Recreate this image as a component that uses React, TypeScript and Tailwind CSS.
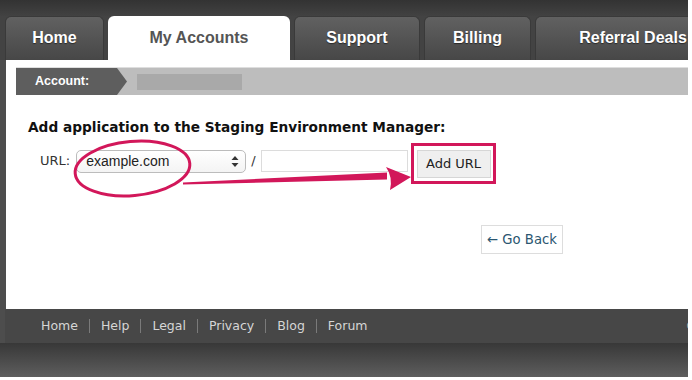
import React from "react";

const tabs = [
  { label: "Home", w: "w-[99px]", active: false },
  { label: "My Accounts", w: "w-[182px]", active: true },
  { label: "Support", w: "w-[126px]", active: false },
  { label: "Billing", w: "w-[107px]", active: false },
  { label: "Referral Deals", w: "w-[196px]", active: false },
];

const links = ["Home", "Help", "Legal", "Privacy", "Blog", "Forum"];

const Annotation = () => (
  <svg className="pointer-events-none absolute left-0 top-0" width="692" height="380" viewBox="0 0 692 380">
    <ellipse cx="132.5" cy="168.5" rx="57.5" ry="27" fill="none" stroke="#d2175a" strokeWidth="3" transform="rotate(-5 132.5 168.5)" />
    <polygon points="183,182.5 387,172.5 387,179.5 183,184.5" fill="#d2175a" />
    <path d="M386 167 L411 177 L390 190 Q393 177 386 167 Z" fill="#d2175a" />
  </svg>
);

export default function App() {
  return (
    <div className="relative h-[380px] w-[692px] bg-white" style={{ fontFamily: '"DejaVu Sans", Verdana, sans-serif' }}>
      <div className="h-[377px] w-[688px] overflow-hidden bg-[#4d4d4d]">
        <div className="w-[800px]">
          <div className="h-[16px] bg-gradient-to-b from-[#333333] to-[#424242]" />
          <div className="flex gap-[4px] bg-[#434343] pl-[5px]" style={{ fontFamily: '"Liberation Sans", Arial, sans-serif' }}>
            {tabs.map((t) => (
              <div
                key={t.label}
                className={`${t.w} flex h-[44px] shrink-0 items-center justify-center rounded-t-[6px] pb-[1px] text-[16px] font-bold ${
                  t.active
                    ? "bg-white text-[#555555]"
                    : "border-x border-t border-[#3a3a3a] bg-gradient-to-b from-[#616161] to-[#474747] text-white [text-shadow:0_1px_1px_rgba(0,0,0,0.5)]"
                }`}
              >
                {t.label}
              </div>
            ))}
          </div>
          <div className="ml-[6px] h-[249px] bg-white pl-[10px] pt-[7px]">
            <div className="flex h-[28px] items-center border-t border-[#dedede] bg-[#bdbdbd]" style={{ fontFamily: '"Liberation Sans", Arial, sans-serif' }}>
              <div className="relative flex h-full w-[101px] items-center bg-[#5e5e5e] pl-[19px] text-[12.5px] font-bold text-white">
                Account:
                <svg className="absolute left-[101px] top-0" width="10" height="27" viewBox="0 0 10 27">
                  <polygon points="0,0 10,13.5 0,27" fill="#5e5e5e" />
                </svg>
              </div>
              <div className="ml-[20px] h-[16px] w-[105px] bg-[#a9a9a9]" />
            </div>
            <div className="ml-[12px] mt-[24px] text-[13.7px] font-bold leading-[16px] text-[#111111]">
              Add application to the Staging Environment Manager:
            </div>
            <div className="ml-[24px] mt-[8px] flex items-start">
              <div className="mt-[10px] text-[13px] leading-[16px] text-[#333333]">URL:</div>
              <div className="ml-[6px] mt-[7px] flex h-[23px] w-[170px] items-center justify-between rounded-[5px] border border-[#bcbcbc] bg-gradient-to-b from-white to-[#f4f4f4] pl-[9px] pr-[6px] text-[14px] text-[#222222]" style={{ fontFamily: '"Liberation Sans", Arial, sans-serif' }}>
                <span>example.com</span>
                <svg width="8" height="13" viewBox="0 0 8 13">
                  <polygon points="4,1 7.5,5 0.5,5" fill="#333333" />
                  <polygon points="0.5,8 7.5,8 4,12" fill="#333333" />
                </svg>
              </div>
              <div className="ml-[5px] mt-[10px] text-[13px] leading-[16px] text-[#333333]">/</div>
              <div className="ml-[5px] mt-[7px] h-[22px] w-[147px] border border-[#dcdcdc] bg-white" />
              <div className="ml-[3px] h-[41px] w-[85px] border-[3px] border-[#d2175a] pl-[3px] pt-[4px]">
                <div className="flex h-[28px] w-[74px] items-center justify-center border border-[#d6d6d6] bg-[#efefef] text-[13px] text-[#222222]">
                  Add URL
                </div>
              </div>
            </div>
            <div className="ml-[465px] mt-[41px] flex h-[29px] w-[82px] items-center justify-center border border-[#dddddd] bg-white text-[13.2px] text-[#2b5670]">
              ← Go Back
            </div>
          </div>
          <div className="ml-[5px] flex h-[34px] items-center bg-[#474747] pl-[36px] text-[12.5px] text-[#d6d6d6]">
            {links.map((l, i) => (
              <React.Fragment key={l}>
                {i > 0 && <span className="mx-[11px] h-[14px] w-px bg-[#7a7a7a]" />}
                <span>{l}</span>
              </React.Fragment>
            ))}
            <span className="ml-[318px]">© 2018</span>
          </div>
          <div className="h-[34px] bg-gradient-to-b from-[#383838] to-[#5e5e5e]" />
        </div>
      </div>
      <Annotation />
    </div>
  );
}
